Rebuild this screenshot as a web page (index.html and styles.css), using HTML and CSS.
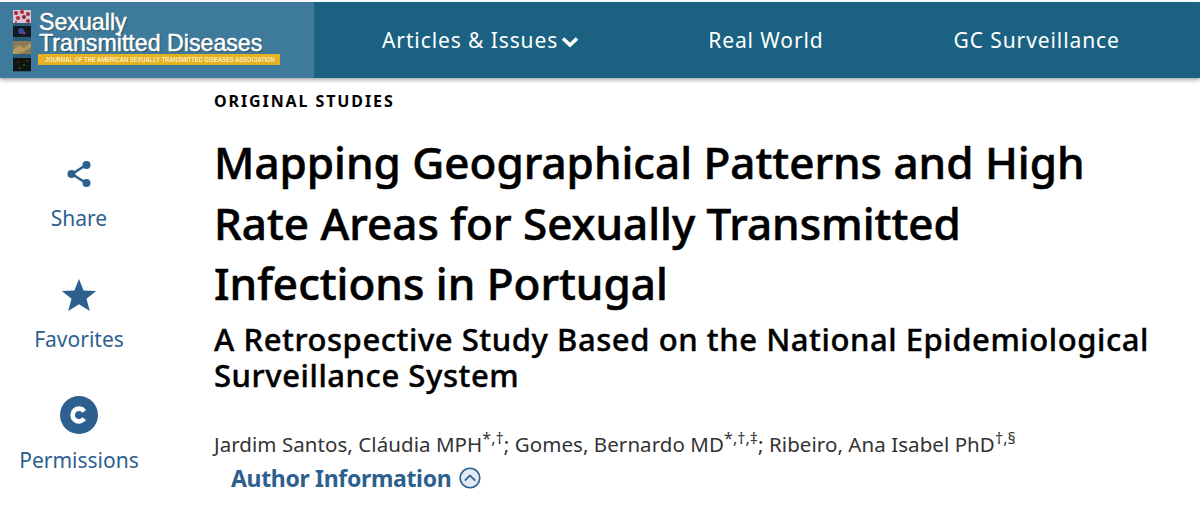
FILE: index.html
```html
<!DOCTYPE html>
<html lang="en">
  <head>
    <meta charset="UTF-8" />
    <meta name="viewport" content="width=device-width, initial-scale=1.0" />
    <title>Mapping Geographical Patterns and High Rate Areas</title>
    <link rel="stylesheet" href="styles.css">
  </head>
  <body>
    <header class="topbar">
      <a class="logo" href="#">
        <svg class="logo-thumbs" width="18" height="62" viewBox="0 0 18 62">
          <rect width="18" height="13" fill="#d9c3cf" />
          <circle cx="3" cy="3" r="2" fill="#a52a3c" />
          <circle cx="9" cy="2" r="2" fill="#b5283f" />
          <circle cx="15" cy="4" r="2" fill="#a52a3c" />
          <circle cx="5" cy="8" r="2" fill="#b5283f" />
          <circle cx="11" cy="7" r="2" fill="#8e2236" />
          <circle cx="15" cy="11" r="2" fill="#b5283f" />
          <circle cx="3" cy="12" r="1" fill="#a52a3c" />
          <rect y="16" width="18" height="11" fill="#14181f" />
          <circle cx="8" cy="21" r="3" fill="#2f4f9a" />
          <circle cx="11" cy="23" r="1.5" fill="#8a3f80" />
          <rect y="31" width="18" height="13" fill="#8d7a55" />
          <path d="M0 40 L6 35 L11 38 L18 33 L18 37 L10 42 L4 44 L0 44 Z" fill="#b39a5f" />
          <rect y="48" width="18" height="13" fill="#10160f" />
          <circle cx="5" cy="52" r="0.8" fill="#7c3a2a" />
          <circle cx="11" cy="55" r="0.8" fill="#3f7a3a" />
          <circle cx="14" cy="51" r="0.8" fill="#8a4a2a" />
          <circle cx="7" cy="58" r="0.8" fill="#3f7a3a" />
        </svg>
        <div class="logo-text">
          <div class="logo-name">Sexually<br />Transmitted Diseases</div>
          <div class="logo-tag"><span>JOURNAL OF THE AMERICAN SEXUALLY TRANSMITTED DISEASES ASSOCIATION</span></div>
        </div>
      </a>
      <nav class="nav">
        <a class="nav-link nav-first" href="#">Articles &amp; Issues<svg class="nav-chevron" width="18" height="12" viewBox="0 0 18 12">
            <path d="M2 2.5 L9 9 L16 2.5" fill="none" stroke="#fff" stroke-width="3.6" />
          </svg></a>
        <a class="nav-link nav-second" href="#">Real World</a>
        <a class="nav-link nav-third" href="#">GC Surveillance</a>
      </nav>
    </header>

    <div class="page">
      <aside class="tools">
        <a class="tool tool-share" href="#">
          <svg width="26" height="28" viewBox="0 0 26 28">
            <path d="M20 5 L6 14 L20 23" fill="none" stroke="#2d5f8f" stroke-width="2.6" />
            <circle cx="20.5" cy="5" r="4" fill="#2d5f8f" />
            <circle cx="5.5" cy="14" r="4" fill="#2d5f8f" />
            <circle cx="20.5" cy="23" r="4" fill="#2d5f8f" />
          </svg>
          <span>Share</span>
        </a>
        <a class="tool tool-fav" href="#">
          <svg width="36" height="34" viewBox="0 0 36 34">
            <path d="M18 1 L22.6 12.4 L35.2 13 L25.5 20.8 L28.8 33 L18 26.2 L7.2 33 L10.5 20.8 L0.8 13 L13.4 12.4 Z" fill="#2d5f8f" />
          </svg>
          <span>Favorites</span>
        </a>
        <a class="tool tool-perm" href="#">
          <svg width="38" height="38" viewBox="0 0 38 38">
            <circle cx="19" cy="19" r="19" fill="#2d5f8f" />
            <path d="M24.2 15.3 A6.4 6.4 0 1 0 24.2 22.7" fill="none" stroke="#fff" stroke-width="4.6" />
          </svg>
          <span>Permissions</span>
        </a>
      </aside>

      <main class="article">
        <div class="kicker">ORIGINAL STUDIES</div>
        <h1 class="title">Mapping Geographical Patterns and High Rate Areas for Sexually Transmitted Infections in Portugal</h1>
        <h2 class="subtitle">A Retrospective Study Based on the National Epidemiological Surveillance System</h2>
        <p class="authors">Jardim Santos, Cláudia MPH<sup>*,†</sup>; Gomes, Bernardo MD<sup>*,†,‡</sup>; Ribeiro, Ana Isabel PhD<sup>†,§</sup></p>
        <a class="author-info" href="#">Author Information
          <svg width="22" height="22" viewBox="0 0 22 22">
            <circle cx="11" cy="11" r="9.8" fill="#e3ecf5" stroke="#2d5f8f" stroke-width="1.6" />
            <path d="M5.8 13.6 L11 8.4 L16.2 13.6" fill="none" stroke="#2d5f8f" stroke-width="1.8" />
          </svg>
        </a>
      </main>
    </div>
  </body>
</html>
```

FILE: styles.css
```css
:root {
  --nav: #1b6282;
  --blue: #2d5f8f;
}

body {
  margin: 0;
  font-family: "Noto Sans", sans-serif;
  background: #fff;
  color: #000;
}

a {
  text-decoration: none;
}

.topbar {
  display: flex;
  height: 76px;
  margin-top: 2px;
  background: var(--nav);
  box-shadow: 0 2px 4px rgba(0, 0, 0, 0.35);
}

.logo {
  display: flex;
  flex: 0 0 314px;
  padding: 8px 0 0 13px;
  gap: 8px;
  box-sizing: border-box;
  background: #3d7a9b;
}

.logo-thumbs {
  flex: none;
  background: #2c5c78;
  filter: blur(0.4px);
}

.logo-text {
  padding-top: 2px;
}

.logo-name {
  font-family: "Liberation Sans", sans-serif;
  font-size: 23.2px;
  line-height: 21px;
  color: #fff;
  text-shadow: 1px 1px 1px rgba(0, 0, 0, 0.45);
  white-space: nowrap;
  -webkit-text-stroke: 0.5px #fff;
}

.logo-tag {
  width: 242px;
  height: 11px;
  margin-left: -1px;
  background: #e6b21f;
}

.logo-tag span {
  display: block;
  font-family: "Liberation Sans", sans-serif;
  font-size: 7.5px;
  font-weight: 700;
  line-height: 11px;
  color: #f7edc8;
  white-space: nowrap;
  margin-left: 7px;
  transform: scaleX(0.77);
  transform-origin: left center;
}

.nav {
  display: flex;
  align-items: center;
  flex: 1;
}

.nav-link {
  color: #fff;
  font-size: 21px;
  letter-spacing: 0.9px;
  white-space: nowrap;
}

.nav-first {
  margin-left: 68px;
}

.nav-second {
  margin-left: 129px;
}

.nav-third {
  margin-left: 130px;
}

.nav-chevron {
  margin-left: 3px;
}

.page {
  display: flex;
}

.tools {
  flex: 0 0 158px;
  display: flex;
  flex-direction: column;
  align-items: center;
  padding-top: 82px;
}

.tool {
  display: flex;
  flex-direction: column;
  align-items: center;
  color: var(--blue);
  font-size: 21px;
  line-height: 27px;
}

.tool-share {
  height: 118px;
  gap: 17px;
}

.tool-fav {
  height: 118px;
  gap: 14px;
}

.tool-perm {
  gap: 13px;
}

.article {
  margin-left: 56px;
  padding-top: 12px;
  min-width: 0;
  flex: 1;
}

.kicker {
  font-size: 16px;
  font-weight: 700;
  letter-spacing: 1.9px;
  line-height: 22px;
}

.title {
  margin: 20px 0 0;
  max-width: 900px;
  font-size: 44px;
  font-weight: 500;
  line-height: 60.5px;
  -webkit-text-stroke: 0.6px #000;
}

.subtitle {
  margin: 7px 0 0;
  font-size: 31px;
  font-weight: 500;
  letter-spacing: 0.56px;
  line-height: 36px;
  -webkit-text-stroke: 0.4px #000;
}

.authors {
  margin: 37px 0 0;
  font-size: 20.5px;
  letter-spacing: 0.06px;
  line-height: 28px;
  color: #333;
}

.authors sup {
  font-size: 16px;
  line-height: 0;
}

.author-info {
  display: flex;
  align-items: center;
  gap: 8px;
  margin: 4px 0 0 17px;
  font-size: 23px;
  font-weight: 700;
  letter-spacing: -0.33px;
  line-height: 32px;
  color: var(--blue);
}
```
